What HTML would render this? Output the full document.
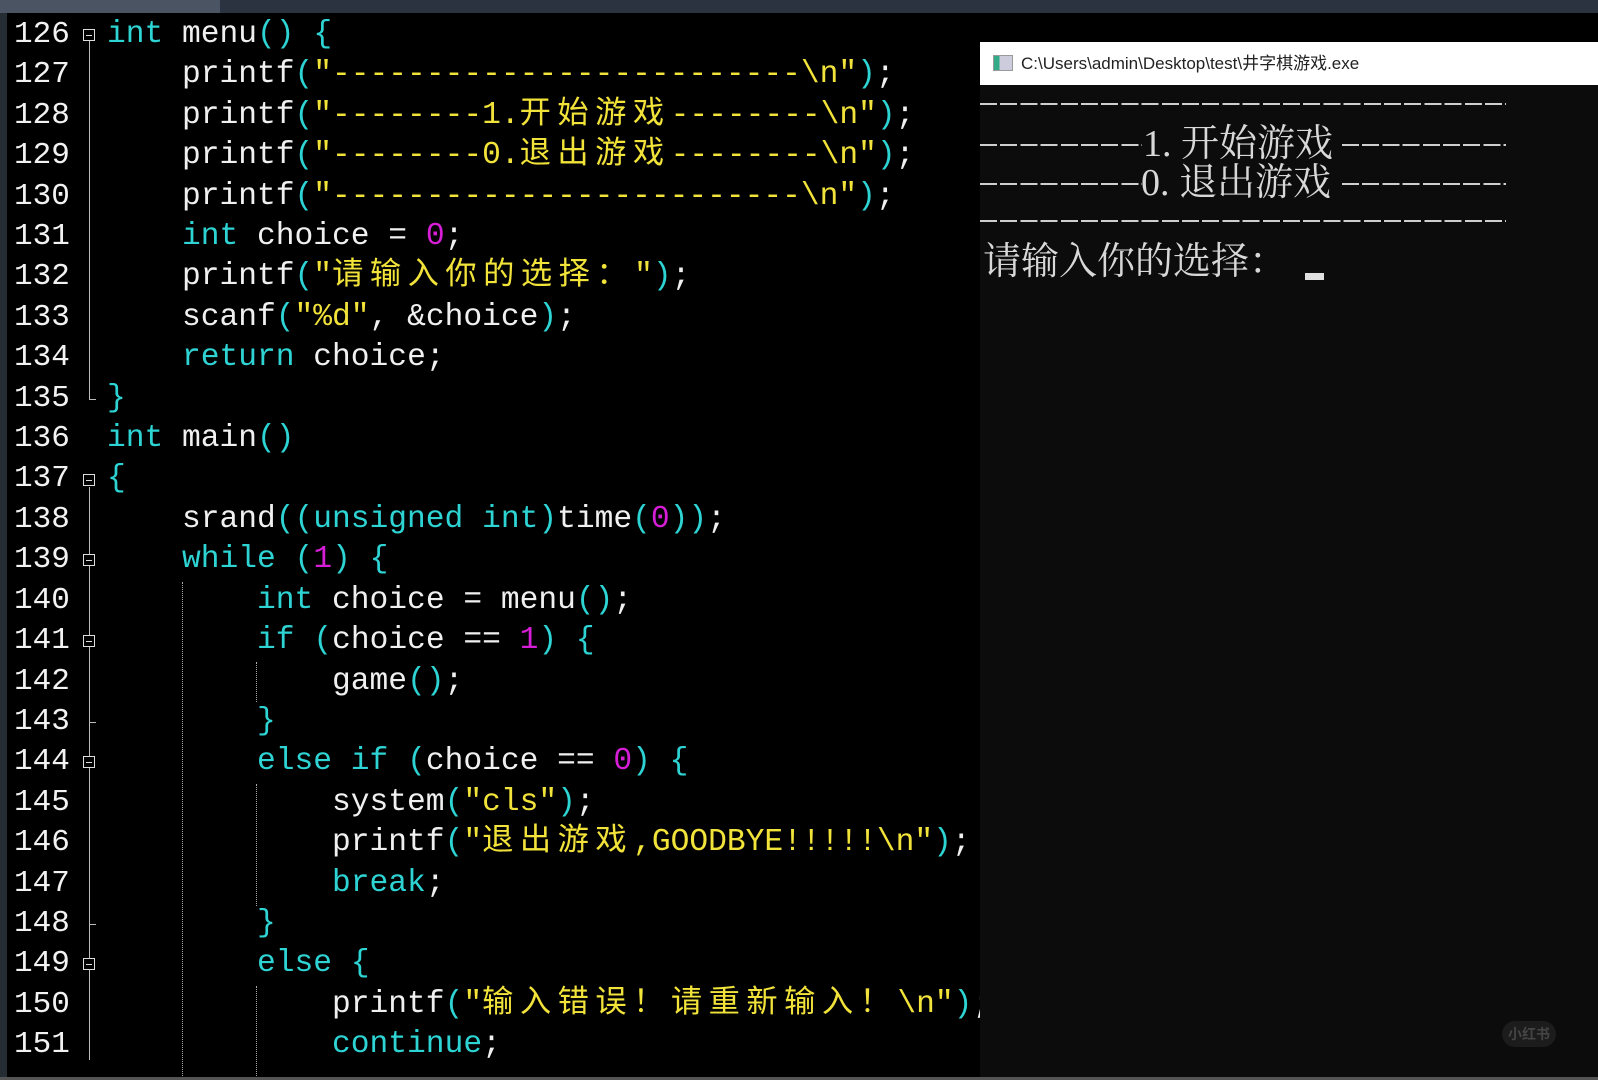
<!DOCTYPE html>
<html><head><meta charset="utf-8"><style>
body{margin:0;width:1598px;height:1080px;background:#000;overflow:hidden;position:relative;font-family:"Liberation Mono","Noto Sans CJK SC",monospace}
.top{position:absolute;left:0;top:0;width:1598px;height:13px;background:#2b3340}
.tab{position:absolute;left:0;top:0;width:220px;height:13px;background:#4a5463}
.lb{position:absolute;left:0;top:13px;width:7px;height:1067px;background:#262c34}
.ln{position:absolute;left:14px;font-size:31px;color:#f2f2f2;line-height:40.4px;white-space:pre}
.c{position:absolute;left:107px;font-size:31.25px;color:#f0f0f0;line-height:40.4px;white-space:pre}
.k{color:#2ed4d4}.s{color:#f2e33a}.n{color:#d61ed6}
.z{letter-spacing:6.5px}
.fb{position:absolute;left:83px;width:12px;height:12px;border:1px solid #ddd;background:#000;box-sizing:border-box}
.fb:after{content:"";position:absolute;left:2px;top:5px;width:6px;height:1px;background:#ddd}
.vl{position:absolute;left:89px;width:1px;background:#bbb}
.tk{position:absolute;left:89px;width:7px;height:1px;background:#bbb}
.dg{position:absolute;width:0;border-left:1px dotted #aaa}
.con{position:absolute;left:980px;top:42px;width:618px;height:1038px;background:#0c0c0c}
.tb{position:absolute;left:0;top:0;width:618px;height:43px;background:#fff;font-family:"Liberation Sans","Noto Sans CJK SC",sans-serif;font-size:17px;color:#222;line-height:43px}
.ct{position:absolute;left:0;font-family:"Liberation Serif","Noto Serif CJK SC",serif;color:#d8d8d8;font-size:38px;white-space:pre;line-height:44px}
.dash{position:absolute;height:2px;background:repeating-linear-gradient(90deg,#cfcfcf 0 17px,transparent 17px 20.2px)}
</style></head><body>
<div class="top"></div><div class="tab"></div><div class="lb"></div>

<div class="vl" style="top:41px;height:359px"></div>
<div class="tk" style="top:399px"></div>
<div class="vl" style="top:487px;height:573px"></div>
<div class="tk" style="top:722px"></div>
<div class="tk" style="top:924px"></div>
<div class="fb" style="top:29px"></div>
<div class="fb" style="top:474px"></div>
<div class="fb" style="top:554px"></div>
<div class="fb" style="top:635px"></div>
<div class="fb" style="top:756px"></div>
<div class="fb" style="top:958px"></div>
<div class="dg" style="left:182px;top:582px;height:498px"></div>
<div class="dg" style="left:256px;top:662px;height:40px"></div>
<div class="dg" style="left:256px;top:784px;height:122px"></div>
<div class="dg" style="left:256px;top:986px;height:94px"></div>

<div class="ln" style="top:15px">126
127
128
129
130
131
132
133
134
135
136
137
138
139
140
141
142
143
144
145
146
147
148
149
150
151</div>
<div class="c" style="top:15px"><span class="k">int</span> menu<span class="k">()</span> <span class="k">{</span>
    printf<span class="k">(</span><span class="s">"-------------------------\n"</span><span class="k">)</span>;
    printf<span class="k">(</span><span class="s">"--------1.<span class="z">开始游戏</span>--------\n"</span><span class="k">)</span>;
    printf<span class="k">(</span><span class="s">"--------0.<span class="z">退出游戏</span>--------\n"</span><span class="k">)</span>;
    printf<span class="k">(</span><span class="s">"-------------------------\n"</span><span class="k">)</span>;
    <span class="k">int</span> choice = <span class="n">0</span>;
    printf<span class="k">(</span><span class="s">"<span class="z">请输入你的选择：</span>"</span><span class="k">)</span>;
    scanf<span class="k">(</span><span class="s">"%d"</span>, &amp;choice<span class="k">)</span>;
    <span class="k">return</span> choice;
<span class="k">}</span>
<span class="k">int</span> main<span class="k">()</span>
<span class="k">{</span>
    srand<span class="k">((unsigned int)</span>time<span class="k">(</span><span class="n">0</span><span class="k">))</span>;
    <span class="k">while</span> <span class="k">(</span><span class="n">1</span><span class="k">)</span> <span class="k">{</span>
        <span class="k">int</span> choice = menu<span class="k">()</span>;
        <span class="k">if</span> <span class="k">(</span>choice == <span class="n">1</span><span class="k">)</span> <span class="k">{</span>
            game<span class="k">()</span>;
        <span class="k">}</span>
        <span class="k">else if</span> <span class="k">(</span>choice == <span class="n">0</span><span class="k">)</span> <span class="k">{</span>
            system<span class="k">(</span><span class="s">"cls"</span><span class="k">)</span>;
            printf<span class="k">(</span><span class="s">"<span class="z">退出游戏</span>,GOODBYE!!!!!\n"</span><span class="k">)</span>;
            <span class="k">break</span>;
        <span class="k">}</span>
        <span class="k">else</span> <span class="k">{</span>
            printf<span class="k">(</span><span class="s">"<span class="z">输入错误！请重新输入！</span>\n"</span><span class="k">)</span>;
            <span class="k">continue</span>;</div>

<div class="con">
 <div class="tb"><span style="display:inline-block;width:18px;height:14px;border:1px solid #999;background:linear-gradient(90deg,#3a8 0 30%,#ccd 30%);margin:0 8px 0 13px;vertical-align:-2px"></span>C:\Users\admin\Desktop\test\井字棋游戏.exe</div>
 <div class="dash" style="left:0;top:61px;width:526px"></div>
 <div class="dash" style="left:0;top:102px;width:162px"></div>
 <div class="ct" style="left:163px;top:80px">1. 开始游戏</div>
 <div class="dash" style="left:362px;top:102px;width:164px"></div>
 <div class="dash" style="left:0;top:141px;width:162px"></div>
 <div class="ct" style="left:161px;top:119px">0. 退出游戏</div>
 <div class="dash" style="left:362px;top:141px;width:164px"></div>
 <div class="dash" style="left:0;top:178px;width:526px"></div>
 <div class="ct" style="left:3px;top:198px">请输入你的选择：</div>
 <div style="position:absolute;left:325px;top:231px;width:19px;height:7px;background:#e0e0e0"></div>
 <div style="position:absolute;left:522px;top:979px;width:54px;height:26px;border-radius:13px;background:#1c1c1c;color:#444;font:bold 14px 'Noto Sans CJK SC',sans-serif;line-height:26px;text-align:center">小红书</div>
</div>
<div style="position:absolute;left:0;top:1077px;width:1598px;height:3px;background:#555"></div>
</body></html>
